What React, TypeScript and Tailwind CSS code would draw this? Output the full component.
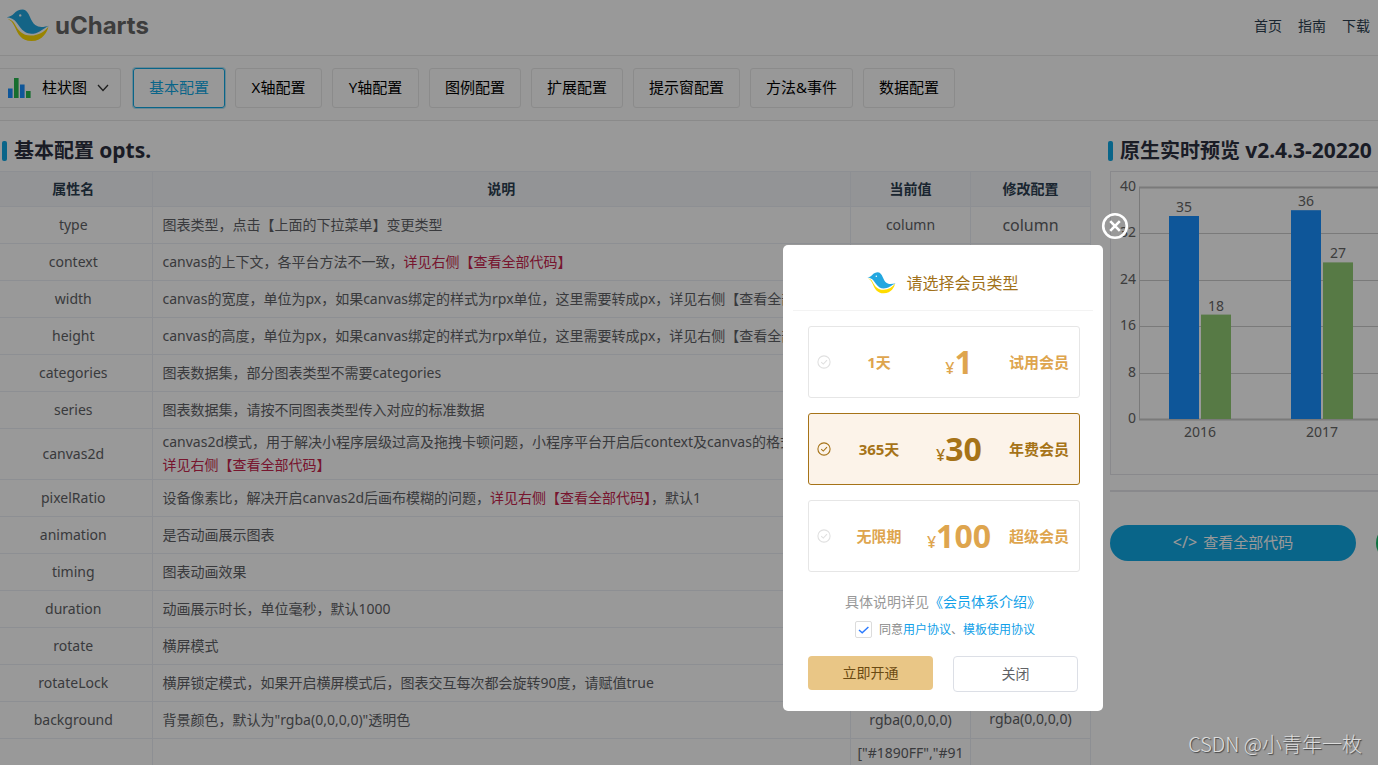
import React, { useState } from "react";

function Bird({ className }: { className: string }) {
  return (
    <svg viewBox="0 0 44 34" className={className} aria-hidden="true">
      <path
        d="M1 10.2 C4 10.6 6.5 12 8 15 C12 22.5 16.5 27.6 25 27.4 C33 27 39 23.5 43 18.2 C42 23 37.5 32.8 25.5 33 C15 33 11.5 25.5 8.5 18.5 C6.5 14 4.5 11.5 1 10.2 Z"
        fill="#ffdc00"
      />
      <path
        d="M0 8.6 C3 7.8 5.5 6.8 7.6 4.6 C10 1.8 13 .4 16.5 .4 C20.5 .9 22.3 4.3 23.8 7.6 C25.2 10.8 27 14.5 29.5 16.6 C33.5 19.6 39 18.4 44 17.2 C39.5 19 37.8 20.8 34.5 22.8 C30 25.6 23.5 26.6 19 23.8 C14.5 20.8 12.3 16.5 9.6 13.2 C7.4 10.6 4.5 9 0 8.6 Z"
        fill="#22a7e0"
      />
      <circle cx="14" cy="6.6" r="1.2" fill="#ffffff" />
    </svg>
  );
}

const tabs = ["基本配置", "X轴配置", "Y轴配置", "图例配置", "扩展配置", "提示窗配置", "方法&事件", "数据配置"];

function CodeNote() {
  return <span className="text-[#c7254e]">详见右侧【查看全部代码】</span>;
}

type Row = { name: string; desc: React.ReactNode; value?: string; edit?: string; large?: boolean };

const rows: Row[] = [
  { name: "type", desc: "图表类型，点击【上面的下拉菜单】变更类型", value: "column", edit: "column", large: true },
  { name: "context", desc: <>canvas的上下文，各平台方法不一致，<CodeNote /></> },
  { name: "width", desc: "canvas的宽度，单位为px，如果canvas绑定的样式为rpx单位，这里需要转成px，详见右侧【查看全部代码】" },
  { name: "height", desc: "canvas的高度，单位为px，如果canvas绑定的样式为rpx单位，这里需要转成px，详见右侧【查看全部代码】" },
  { name: "categories", desc: "图表数据集，部分图表类型不需要categories" },
  { name: "series", desc: "图表数据集，请按不同图表类型传入对应的标准数据" },
  {
    name: "canvas2d",
    desc: (
      <>
        canvas2d模式，用于解决小程序层级过高及拖拽卡顿问题，小程序平台开启后context及canvas的格式
        <br />
        <CodeNote />
      </>
    ),
  },
  { name: "pixelRatio", desc: <>设备像素比，解决开启canvas2d后画布模糊的问题，<CodeNote />，默认1</> },
  { name: "animation", desc: "是否动画展示图表" },
  { name: "timing", desc: "图表动画效果" },
  { name: "duration", desc: "动画展示时长，单位毫秒，默认1000" },
  { name: "rotate", desc: "横屏模式" },
  { name: "rotateLock", desc: "横屏锁定模式，如果开启横屏模式后，图表交互每次都会旋转90度，请赋值true" },
  { name: "background", desc: '背景颜色，默认为"rgba(0,0,0,0)"透明色', value: "rgba(0,0,0,0)", edit: "rgba(0,0,0,0)" },
];

function SectionTitle({ children, suffix }: { children: React.ReactNode; suffix: string }) {
  return (
    <h2 className="flex h-[50px] items-center gap-[7px] overflow-hidden pt-[10px] text-[20px] font-bold whitespace-nowrap text-[#2c303f]">
      <span className="h-5 w-[5px] shrink-0 rounded-[2px] bg-[#10a8e4]" />
      <span>
        {children} <span className="text-[21px]">{suffix}</span>
      </span>
    </h2>
  );
}

const bars = [
  { x: 58, value: 35, color: "#1890ff" },
  { x: 90, value: 18, color: "#91cb74" },
  { x: 180, value: 36, color: "#1890ff" },
  { x: 212, value: 27, color: "#91cb74" },
];

function Chart() {
  return (
    <svg width="100%" height="302" className="block text-[14px]" fill="#666666" role="img" aria-label="柱状图">
      {[0, 8, 16, 24, 32, 40].map((t) => {
        const y = Math.round(247 - t * 5.8);
        return (
          <g key={t}>
            <line x1="28" x2="400" y1={y + 0.5} y2={y + 0.5} stroke="#cccccc" strokeWidth={t === 0 || t === 40 ? 2 : 1} />
            <text x="25" y={y + 4} textAnchor="end">{t}</text>
          </g>
        );
      })}
      <line x1="28.5" x2="28.5" y1="15" y2="247" stroke="#cccccc" />
      {bars.map((b) => (
        <g key={b.x}>
          <rect x={b.x} y={247 - b.value * 5.8} width="30" height={b.value * 5.8} fill={b.color} />
          <text x={b.x + 15} y={243 - b.value * 5.8} textAnchor="middle">{b.value}</text>
        </g>
      ))}
      <text x="89" y="265" textAnchor="middle">2016</text>
      <text x="211" y="265" textAnchor="middle">2017</text>
    </svg>
  );
}

const plans = [
  { days: "1天", price: "1", label: "试用会员" },
  { days: "365天", price: "30", label: "年费会员" },
  { days: "无限期", price: "100", label: "超级会员" },
];

function CheckCircle({ className }: { className: string }) {
  return (
    <svg viewBox="0 0 14 14" className={className} fill="none" stroke="currentColor" aria-hidden="true">
      <circle cx="7" cy="7" r="6.1" strokeWidth="1.1" />
      <path d="M4.2 7.2 L6.3 9.1 L10 5.2" strokeWidth="1.1" />
    </svg>
  );
}

function MemberDialog() {
  const [selected, setSelected] = useState(1);
  return (
    <div role="dialog" aria-label="请选择会员类型" className="relative h-[466px] w-80 rounded-[5px] bg-white">
      <button aria-label="关闭窗口" className="absolute -top-[33px] -right-[26px] size-7">
        <svg viewBox="0 0 28 28" fill="none" stroke="#ffffff" strokeWidth="2.6" className="size-7">
          <circle cx="14" cy="14" r="11.8" />
          <path d="M9.2 9.2 L18.8 18.8 M18.8 9.2 L9.2 18.8" />
        </svg>
      </button>
      <header className="mx-[10px] flex h-[66px] items-center justify-center gap-[10px] border-b border-[#f3f3f3] pt-[10px]">
        <Bird className="h-[22px] w-[29px]" />
        <h3 className="text-[16px] text-[#a1711a]">请选择会员类型</h3>
      </header>
      <div className="flex flex-col gap-[15px] pt-[15px] pr-[23px] pl-[25px]">
        {plans.map((p, i) => (
          <button
            key={p.price}
            onClick={() => setSelected(i)}
            className={
              "flex h-[72px] items-center rounded-[3px] border pr-[10px] pl-2 text-[15px] font-bold " +
              (selected === i ? "border-[#a67318] bg-[#fcf3e9] text-[#a67318]" : "border-[#e6e6e6] bg-white text-[#dea54e]")
            }
          >
            <CheckCircle className={selected === i ? "size-[14px] text-[#a67318]" : "size-[14px] text-[#e0e0e0]"} />
            <span className="ml-[7px] w-[82px] text-center">{p.days}</span>
            <span className="flex w-[78px] items-baseline justify-center leading-none">
              <span className="text-[16px] font-medium">¥</span>
              <span className="text-[32px]">{p.price}</span>
            </span>
            <span className="ml-auto">{p.label}</span>
          </button>
        ))}
      </div>
      <p className="pt-5 text-center text-[14px] leading-5 text-[#999999]">
        具体说明详见<a href="#intro" className="text-[#10a0e8]">《会员体系介绍》</a>
      </p>
      <div className="flex items-center justify-center gap-[7px] pt-[9px] pl-1 text-[12px] leading-4 text-[#888888]">
        <span className="relative flex size-[17px]">
          <input
            id="agree"
            type="checkbox"
            defaultChecked
            className="peer size-[17px] appearance-none rounded-[2px] border border-[#dcdcdc] bg-white"
          />
          <svg
            viewBox="0 0 17 17"
            className="pointer-events-none absolute inset-0 hidden size-[17px] peer-checked:block"
            fill="none"
            stroke="#2979ff"
            strokeWidth="1.4"
          >
            <path d="M4 9 L7.2 11.8 L13.4 6" />
          </svg>
        </span>
        <label htmlFor="agree">
          同意<a href="#user" className="text-[#10a0e8]">用户协议</a>、<a href="#template" className="text-[#10a0e8]">模板使用协议</a>
        </label>
      </div>
      <div className="grid grid-cols-2 items-start gap-5 px-[25px] pt-[18px] text-[14px]">
        <button className="h-[34px] rounded-[4px] bg-[#e9c686] pb-[2px] text-[#6b4a12]">立即开通</button>
        <button className="h-9 rounded-[4px] border border-[#dcdfe6] bg-white pb-[2px] text-[#606266]">关闭</button>
      </div>
    </div>
  );
}

export default function App() {
  const [active, setActive] = useState(0);
  return (
    <div className="relative h-screen overflow-hidden bg-white font-['Noto_Sans','Noto_Sans_CJK_SC',sans-serif] text-[14px] text-[#606266]">
      <header className="flex h-14 items-center justify-between border-b border-[#e8e8e8] pr-2 pl-[6px] shadow-sm">
        <div className="flex items-center gap-[5px] pb-1">
          <Bird className="h-[33px] w-11" />
          <span className="font-['Inter',sans-serif] text-[24px] font-bold text-[#666666]">uCharts</span>
        </div>
        <nav className="flex gap-4 pb-1 text-[#2c3e50]">
          <a href="#home">首页</a>
          <a href="#guide">指南</a>
          <a href="#download">下载</a>
        </nav>
      </header>

      <div className="flex h-[65px] items-center gap-[10px] border-b border-[#e6e6e6] bg-[#fdfdfd] text-[15px] text-black">
        <label className="mr-[2px] flex h-10 w-[121px] items-center rounded-r-[3px] border border-l-0 border-[#e8e8e8] pl-2">
          <svg viewBox="0 0 23 20" className="h-5 w-[23px]" aria-hidden="true">
            <path d="M0 10.5h4.6v9.5H0zM12 6.5h4.6v13.5h-4.600z" fill="#1890ff" />
            <path d="M6 0h4.600v20H6zM18 13h4.600v7h-4.600z" fill="#27b84f" />
          </svg>
          <select aria-label="图表类型" className="ml-[11px] w-[55px] appearance-none bg-transparent pb-[2px]">
            <option>柱状图</option>
          </select>
          <svg viewBox="0 0 12 8" className="h-2 w-3" fill="none" stroke="#333333" strokeWidth="1.3" aria-hidden="true">
            <path d="M1 1 L6 6.5 L11 1" />
          </svg>
        </label>
        {tabs.map((t, i) => (
          <button
            key={t}
            onClick={() => setActive(i)}
            className={
              "h-10 min-w-[87px] rounded-[3px] border px-[15px] pb-[2px] whitespace-nowrap " +
              (active === i ? "border-[#10a8e4] text-[#10a8e4] ring-1 ring-[#10a8e4]/30" : "border-[#e8e8e8]")
            }
          >
            {t}
          </button>
        ))}
      </div>

      <main className="grid grid-cols-[minmax(0,1fr)_270px] gap-x-[17px]">
        <section>
          <div className="pl-[2px]">
            <SectionTitle suffix="opts.">基本配置</SectionTitle>
          </div>
          <table className="w-full table-fixed border-collapse">
            <colgroup>
              <col className="w-[152px]" />
              <col />
              <col className="w-[120px]" />
              <col className="w-[120px]" />
            </colgroup>
            <thead>
              <tr className="h-[35px] bg-[#f5f7fa] text-[#2c3e50]">
                {["属性名", "说明", "当前值", "修改配置"].map((h) => (
                  <th key={h} className="border border-l-0 border-[#ebeef5] pb-[2px] font-bold first:pr-[5px]">{h}</th>
                ))}
              </tr>
            </thead>
            <tbody>
              {rows.map((r) => (
                <tr key={r.name} className="h-[37px]">
                  <td className="border border-l-0 border-[#ebeef5] pr-[5px] pb-[2px] text-center">{r.name}</td>
                  <td className="border border-[#ebeef5] px-[10px] pt-[1px] pb-[3px] leading-[23px]">{r.desc}</td>
                  <td className="border border-[#ebeef5] pb-[2px] text-center">{r.value}</td>
                  <td className={r.large ? "border border-[#ebeef5] text-center text-[16px]" : "border border-[#ebeef5] pb-1 text-center"}>
                    {r.edit}
                  </td>
                </tr>
              ))}
              <tr>
                <td className="border border-l-0 border-[#ebeef5] text-center">color</td>
                <td className="border border-[#ebeef5] px-[10px]">主题颜色</td>
                <td className="border border-[#ebeef5] px-[5px] text-center leading-[27px] break-all">
                  ["#1890FF","#91CB74","#FAC858","#EE6666","#73C0DE"]
                </td>
                <td className="border border-[#ebeef5]" />
              </tr>
            </tbody>
          </table>
        </section>

        <section className="min-w-0 overflow-hidden">
          <SectionTitle suffix="v2.4.3-20220">原生实时预览</SectionTitle>
          <div className="ml-[2px] overflow-hidden border border-r-0 border-[#e4e4e9]">
            <Chart />
          </div>
          <div className="mt-[15px] ml-[2px] h-[2px] bg-[#e4e4e9]" />
          <div className="mt-[33px] ml-[2px] flex gap-5 text-[15px] text-white">
            <button className="flex h-9 w-[246px] shrink-0 items-center justify-center gap-[6px] rounded-full bg-[#10a8e4] pb-[2px]">
              <span className="text-[16px]">&lt;/&gt;</span>
              查看全部代码
            </button>
            <button aria-label="更多" className="h-9 w-[246px] shrink-0 rounded-full bg-[#19be6b]" />
          </div>
        </section>
      </main>

      <div className="absolute inset-0 flex items-start justify-end bg-black/40 pt-[245px] pr-[275px]">
        <MemberDialog />
      </div>
      <p className="absolute right-4 bottom-[6px] font-['Noto_Sans_CJK_SC',sans-serif] text-[20px] leading-[30px] font-light text-[#dddddd] [text-shadow:1px_1px_1px_#444444]">
        CSDN @小青年一枚
      </p>
    </div>
  );
}
